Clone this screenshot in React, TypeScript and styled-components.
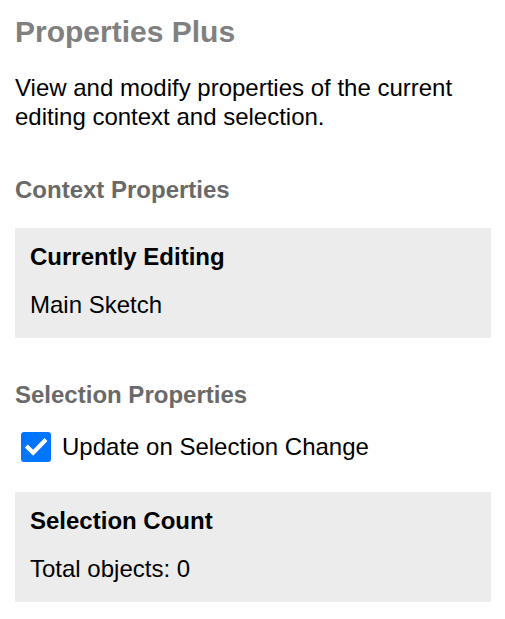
import React from "react";
import styled, { createGlobalStyle } from "styled-components";

const Global = createGlobalStyle`
  html, body { margin: 0; padding: 0; background: #ffffff; }
  body { font-family: "Liberation Sans", Arial, sans-serif; color: #000; }
`;

const Page = styled.div`
  padding: 14px 14px 15px 15px;
  display: flex;
  flex-direction: column;
`;

const Title = styled.h1`
  margin: 0;
  font-size: 30px;
  line-height: 36px;
  font-weight: bold;
  color: #808080;
`;

const Intro = styled.p`
  margin: 23px 0 0 0;
  font-size: 24px;
  line-height: 29px;
`;

const SectionTitle = styled.h2<{ $top: number }>`
  margin: ${(p) => p.$top}px 0 0 0;
  font-size: 24px;
  line-height: 28px;
  font-weight: bold;
  color: #696969;
`;

const Card = styled.div<{ $top: number }>`
  background: #ececec;
  padding: 15px 15px 19px 15px;
  margin-top: ${(p) => p.$top}px;
  display: flex;
  flex-direction: column;
  gap: 20px;
`;

const CardTitle = styled.div`
  font-size: 24px;
  font-weight: bold;
  line-height: 28px;
`;

const CardValue = styled.div`
  font-size: 24px;
  line-height: 28px;
`;

const CheckRow = styled.label`
  display: flex;
  align-items: center;
  gap: 11px;
  margin: 23px 0 0 6px;
  font-size: 24px;
  line-height: 28px;
`;

const Box = styled.span`
  width: 30px;
  height: 30px;
  border-radius: 3px;
  background: #0075ff;
  display: inline-flex;
  align-items: center;
  justify-content: center;
  flex: none;
`;

export default function App() {
  return (
    <>
      <Global />
      <Page>
        <Title>Properties Plus</Title>
        <Intro>
          View and modify properties of the current editing context and selection.
        </Intro>
        <SectionTitle $top={45}>Context Properties</SectionTitle>
        <Card $top={24}>
          <CardTitle>Currently Editing</CardTitle>
          <CardValue>Main Sketch</CardValue>
        </Card>
        <SectionTitle $top={43}>Selection Properties</SectionTitle>
        <CheckRow>
          <Box>
            <svg width="30" height="30" viewBox="0 0 30 30">
              <path d="M6.8 15.5 L12.2 20.8 L23.5 9" fill="none" stroke="#fff" strokeWidth="4.2" strokeLinecap="square" strokeLinejoin="miter" />
            </svg>
          </Box>
          Update on Selection Change
        </CheckRow>
        <Card $top={30}>
          <CardTitle>Selection Count</CardTitle>
          <CardValue>Total objects: 0</CardValue>
        </Card>
      </Page>
    </>
  );
}
